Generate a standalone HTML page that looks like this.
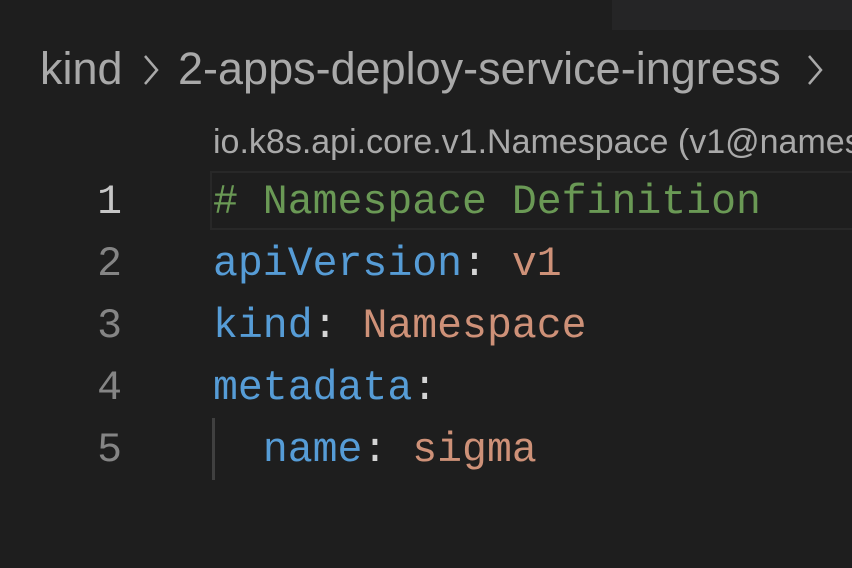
<!DOCTYPE html>
<html><head><style>
html,body{margin:0;padding:0;}
body{width:852px;height:568px;background:#1e1e1e;position:relative;overflow:hidden;}
.abs{position:absolute;white-space:nowrap;}
.bc{font-family:"Liberation Sans",sans-serif;color:#a9a9a9;}
.code{font-family:"Liberation Mono",monospace;font-size:41.5px;line-height:62px;}
.num{font-family:"Liberation Mono",monospace;font-size:41.5px;line-height:62px;color:#858585;width:122px;text-align:right;left:0;}
.k{color:#569cd6}.s{color:#ce9178}.c{color:#6a9955}.p{color:#d4d4d4}
</style></head><body>
<div class="abs" style="left:612px;top:0;width:240px;height:30px;background:#252526;"></div>
<div class="abs bc" style="left:40px;top:42px;font-size:45px;line-height:54px;">kind</div>
<svg class="abs" style="left:140px;top:52px" width="24" height="36"><path d="M5 4 L17 18 L5 32" fill="none" stroke="#a9a9a9" stroke-width="2.5"/></svg>
<div class="abs bc" style="left:178px;top:42px;font-size:45px;line-height:54px;">2-apps-deploy-service-ingress</div>
<svg class="abs" style="left:804px;top:52px" width="24" height="36"><path d="M5 4 L17 18 L5 32" fill="none" stroke="#a9a9a9" stroke-width="2.5"/></svg>
<div class="abs bc" style="left:213px;top:121px;width:639px;overflow:hidden;font-size:34px;line-height:42px;">io.k8s.api.core.v1.Namespace (v1@names</div>
<div class="abs" style="left:210px;top:171px;width:642px;height:59px;border:2px solid #282828;border-right:none;box-sizing:border-box;"></div>
<div class="abs" style="left:212px;top:418px;width:3px;height:62px;background:#404040;"></div>
<div class="abs num" style="top:172px;color:#c6c6c6">1</div>
<div class="abs num" style="top:234px">2</div>
<div class="abs num" style="top:296px">3</div>
<div class="abs num" style="top:358px">4</div>
<div class="abs num" style="top:420px">5</div>
<div class="abs code c" style="left:213px;top:172px">#&nbsp;Namespace Definition</div>
<div class="abs code" style="left:213px;top:234px"><span class="k">apiVersion</span><span class="p">:</span> <span class="s">v1</span></div>
<div class="abs code" style="left:213px;top:296px"><span class="k">kind</span><span class="p">:</span> <span class="s">Namespace</span></div>
<div class="abs code" style="left:213px;top:358px"><span class="k">metadata</span><span class="p">:</span></div>
<div class="abs code" style="left:213px;top:420px">&nbsp;&nbsp;<span class="k">name</span><span class="p">:</span> <span class="s">sigma</span></div>
</body></html>
